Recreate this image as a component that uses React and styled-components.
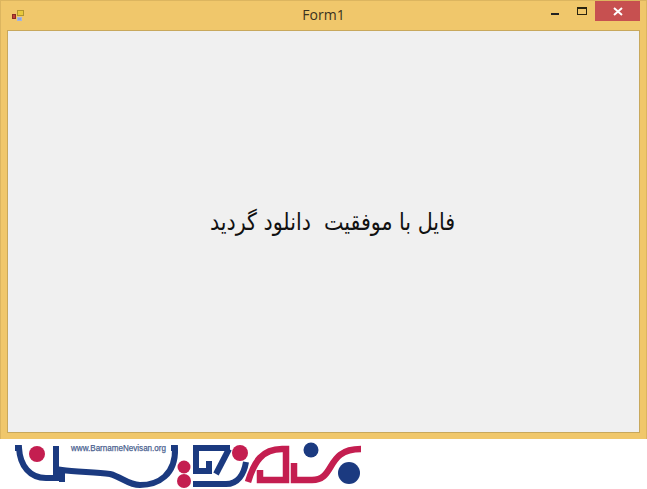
import React from 'react';
import styled, {createGlobalStyle} from 'styled-components';

const GlobalStyle = createGlobalStyle`
  html, body {
    margin: 0;
    padding: 0;
    background: #ffffff;
  }
`

const Page = styled.div`
  width: 647px;
  height: 489px;
  overflow: hidden;
  background: #ffffff;
`

const Win = styled.div`
  box-sizing: border-box;
  width: 647px;
  height: 439px;
  background: #f0c76b;
  border: 1px solid #dcb55f;
  border-bottom: none;
  padding: 0 6px 6px;
  display: flex;
  flex-direction: column;
`

const TitleBar = styled.div`
  height: 29px;
  flex-shrink: 0;
  display: flex;
  align-items: flex-start;
  position: relative;
`

const AppIcon = styled.svg`
  width: 16px;
  height: 16px;
  margin: 7px 0 0 3px;
`

const Title = styled.div`
  position: absolute;
  left: 0;
  right: 0;
  top: 4px;
  text-align: center;
  font: 14px "Open Sans", "Liberation Sans", sans-serif;
  color: #3a3220;
`

const Controls = styled.div`
  margin-left: auto;
  display: flex;
  align-items: flex-start;
`

const Ctrl = styled.div`
  width: ${props => props.$close ? '45px' : '27px'};
  height: 20px;
  background: ${props => props.$close ? '#c75050' : 'transparent'};
  display: flex;
  align-items: center;
  justify-content: center;
`

const Client = styled.div`
  flex: 1;
  background: #f0f0f0;
  border: 1px solid #c8a85c;
  display: flex;
  align-items: center;
  justify-content: center;
`

const Message = styled.div`
  direction: rtl;
  white-space: pre;
  font: 24px "DejaVu Sans", sans-serif;
  color: #111111;
  transform: scaleX(0.86);
  margin-left: 18px;
  margin-top: -20px;
`

const Footer = styled.div`
  height: 50px;
  background: #ffffff;
`

const LogoSvg = styled.svg`
  display: block;
  width: 380px;
  height: 50px;
`

const BLUE = '#1b3a80'
const RED = '#c41e50'

// page coordinates, so the numbers can be read straight off the screenshot
const Logo = () => (
  <LogoSvg viewBox="0 439 380 50" fill="none">
    <g stroke={BLUE} strokeWidth="6">
      <path d="M15 448H19C20 466 30 478 46 478H56V446" />
      <path d="M62 482V470C75 472 95 472 110 474C122 477 128 485 140 485C158 485 176 475 175 448H171" />
      <path d="M230 448H196V471H209V461" />
      <path d="M229 449L216 474" />
      <path d="M193 484H226C238 484 244 474 246 462" />
    </g>
    <circle cx="37" cy="454" r="8" fill={RED} />
    <circle cx="184" cy="467" r="6.5" fill={RED} />
    <circle cx="184" cy="481" r="7" fill={RED} />
    <circle cx="240" cy="453" r="8" fill={RED} />
    <circle cx="311" cy="450" r="7.5" fill={BLUE} />
    <circle cx="349" cy="473" r="11" fill={BLUE} />
    <g stroke={RED} strokeWidth="6.5">
      <path d="M248 482C254 462 262 449 282 449H286V480H260V470" />
      <path d="M294 463V480H312C336 480 325 449 361 449" />
    </g>
    <text x="71" y="451" fontFamily="'Liberation Sans', sans-serif" fontSize="9" fill="#4a5f8f" stroke="#4a5f8f" strokeWidth="0.25" textLength="95" lengthAdjust="spacingAndGlyphs">www.BarnameNevisan.org</text>
  </LogoSvg>
)

const App = () => {
  return (
    <Page>
      <GlobalStyle />
      <Win>
        <TitleBar>
          <AppIcon viewBox="0 0 16 16">
            <rect x="7.5" y="2.5" width="6" height="5" fill="#e8c93c" stroke="#b0952f" />
            <rect x="2.5" y="6.5" width="3" height="4" fill="#c0413a" stroke="#8a2a25" />
            <rect x="7.5" y="9.5" width="4" height="3" fill="#8fa4dc" stroke="#a5b5dc" />
          </AppIcon>
          <Title>Form1</Title>
          <Controls>
            <Ctrl>
              <svg width="10" height="10" viewBox="0 0 10 10"><rect x="1" y="7" width="8" height="2" fill="#222" /></svg>
            </Ctrl>
            <Ctrl>
              <svg width="10" height="9" viewBox="0 0 10 9" fill="none"><rect x="0.5" y="0.5" width="9" height="7" stroke="#2a2410" /><rect x="0" y="0" width="10" height="2" fill="#2a2410" /></svg>
            </Ctrl>
            <Ctrl $close>
              <svg width="10" height="9" viewBox="0 0 10 9" fill="none"><path d="M1 1L9 8M9 1L1 8" stroke="#fff" strokeWidth="2" /></svg>
            </Ctrl>
          </Controls>
        </TitleBar>
        <Client>
          <Message>فایل با موفقیت  دانلود گردید</Message>
        </Client>
      </Win>
      <Footer>
        <Logo />
      </Footer>
    </Page>
  );
}

export default App;
